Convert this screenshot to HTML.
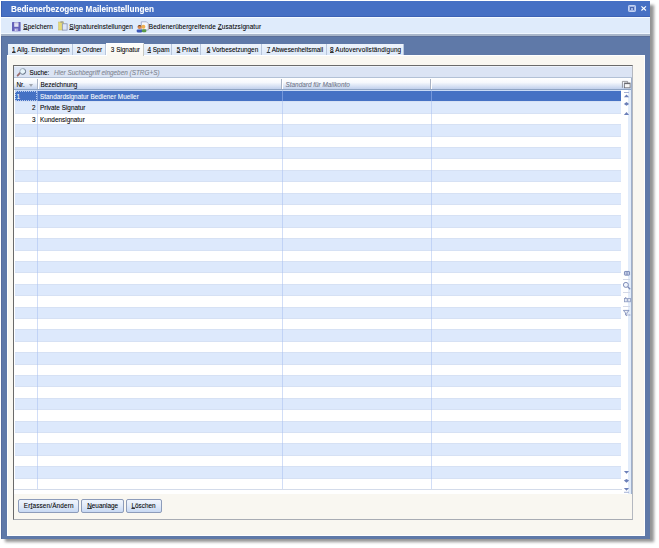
<!DOCTYPE html>
<html><head><meta charset="utf-8">
<style>
*{margin:0;padding:0;box-sizing:border-box}
html,body{width:659px;height:548px;background:#fff;overflow:hidden;position:relative;font-family:"Liberation Sans",sans-serif}
.a{position:absolute}
.t{position:absolute;white-space:nowrap;font-size:6.4px;line-height:8px;color:#000;-webkit-text-stroke-width:0.07px}
.row{position:absolute;left:15.4px;width:606.1px;height:11.4px}
u{text-decoration:underline;text-underline-offset:0.1px;text-decoration-thickness:0.5px;text-decoration-color:#333}
.tab{position:absolute;top:43.8px;height:11px;background:linear-gradient(#eef4fc,#dce8f8);border-right:1px solid #b8c6dc}
.btn{position:absolute;top:498.8px;height:13.8px;border:1px solid #8d9cba;border-radius:2px;background:linear-gradient(#f0f5fd,#e2ebf9 45%,#c8d9f3)}
svg{position:absolute;overflow:visible}
</style></head><body>
<!-- shadow -->
<div class="a" style="left:5px;top:4.5px;width:648.5px;height:537.5px;background:rgba(0,0,0,0.42);filter:blur(1.6px)"></div>
<!-- window frame -->
<div class="a" style="left:1.3px;top:1px;width:648.7px;height:537.5px;background:#5f79a8;border-left:0.8px solid #566c9c"></div>
<!-- title bar -->
<div class="a" style="left:1px;top:1px;width:649px;height:15.8px;background:#4670c4;border-left:1px solid #3a5fb0;border-bottom:0.8px solid #3d62b5"></div>
<div class="t" style="left:11px;top:4.3px;font-size:8.8px;line-height:10px;font-weight:bold;color:#fff;transform:scaleX(0.925);transform-origin:0 0">Bedienerbezogene Maileinstellungen</div>
<!-- restore icon -->
<div class="a" style="left:628.2px;top:5.2px;width:7.8px;height:7px;background:#9fb5e6;border:0.7px solid #c4d2f2;border-radius:1.2px"></div>
<div class="a" style="left:630.3px;top:7px;width:3.6px;height:3.4px;border:0.8px solid #4a66b0;border-bottom-width:0"></div>
<!-- close X -->
<svg style="left:640.7px;top:6.4px" width="5.4" height="4.8" viewBox="0 0 5.4 4.8"><path d="M0.4 0.3 L5 4.5 M5 0.3 L0.4 4.5" stroke="#fff" stroke-width="1.1"/></svg>
<!-- toolbar -->
<div class="a" style="left:1px;top:16.5px;width:649px;height:17.5px;background:#dfebfb;border-top:1px solid #f6fbff;border-bottom:1px solid #f0f7ff"></div>
<div class="a" style="left:1px;top:34px;width:649px;height:2px;background:#a9b6c9"></div>
<div class="a" style="left:1px;top:36px;width:649px;height:1px;background:#5a6e98"></div>
<!-- save icon -->
<svg style="left:12px;top:21.5px" width="9" height="9.5" viewBox="0 0 9 9.5">
<rect x="0" y="0" width="8.6" height="9.3" rx="0.6" fill="#6461b8"/>
<rect x="2.2" y="0.4" width="4.3" height="4.4" fill="#e4e4f4"/>
<rect x="2.6" y="1.6" width="3.4" height="0.5" fill="#b8b8d0"/>
<rect x="2.4" y="6.4" width="3.8" height="2.9" fill="#a6a4dc"/>
<rect x="3.2" y="7.2" width="1" height="1.6" fill="#e8e8f8"/>
</svg>
<div class="t" style="left:23.3px;top:23px;letter-spacing:0.1px"><u>S</u>peichern</div>
<!-- clipboard icon -->
<svg style="left:57.5px;top:21.3px" width="10" height="10" viewBox="0 0 10 10">
<rect x="0.6" y="1" width="5" height="8" fill="#e6da78" stroke="#c8bd60" stroke-width="0.5"/>
<rect x="2.4" y="0.3" width="3" height="1.5" fill="#a0a090"/>
<rect x="4.3" y="2.8" width="4.8" height="6.3" fill="#dfe6f8" stroke="#7c86aa" stroke-width="0.7"/>
</svg>
<div class="t" style="left:69.3px;top:23px;letter-spacing:0.1px"><u>S</u>ignatureinstellungen</div>
<!-- people icon -->
<svg style="left:135.5px;top:21px" width="13" height="11.5" viewBox="0 0 13 11.5">
<path d="M5.3 0.8 H10.5 L12.3 2.6 V9 H5.3 Z" fill="#f4f6fb" stroke="#8c94b8" stroke-width="0.7"/>
<circle cx="3.6" cy="6" r="2.1" fill="#d88850"/>
<path d="M1.5 5.5 Q3.6 3 5.7 5.5 Q3.6 4.6 1.5 5.5Z" fill="#3a2a20"/>
<rect x="0.6" y="8.4" width="5.8" height="3" rx="1.3" fill="#3c58b8"/>
<circle cx="7.4" cy="5.8" r="2" fill="#f0b050"/>
<rect x="5.8" y="8.2" width="4.6" height="3" rx="1.3" fill="#5a9a48"/>
</svg>
<div class="t" style="left:148.8px;top:23px;letter-spacing:0.1px">Bedienerübergreifende <u>Z</u>usatzsignatur</div>

<!-- content -->
<div class="a" style="left:6.8px;top:54.8px;width:637.8px;height:480.9px;background:#f9f7f1;border:1px solid #fff"></div>

<!-- tabs -->
<div class="tab" style="left:7.5px;width:65px"></div>
<div class="t" style="left:12px;top:46.3px"><u>1</u> Allg. Einstellungen</div>
<div class="tab" style="left:72.5px;width:33.8px"></div>
<div class="t" style="left:77px;top:46.3px"><u>2</u> Ordner</div>
<div class="a" style="left:106.3px;top:42.7px;width:37.4px;height:13px;background:linear-gradient(#fdfdfb,#f9f7f1);border-left:1px solid #fff;border-top:1px solid #fff;border-right:1px solid #c8c8c0"></div>
<div class="t" style="left:110.8px;top:45.5px">3 Signatur</div>
<div class="tab" style="left:143.7px;width:28.3px"></div>
<div class="t" style="left:147.5px;top:46.3px"><u>4</u> Spam</div>
<div class="tab" style="left:172px;width:29px"></div>
<div class="t" style="left:176.7px;top:46.3px"><u>5</u> Privat</div>
<div class="tab" style="left:201px;width:61px"></div>
<div class="t" style="left:206.7px;top:46.3px"><u>6</u> Vorbesetzungen</div>
<div class="tab" style="left:262px;width:64.7px"></div>
<div class="t" style="left:266.7px;top:46.3px"><u>7</u> Abwesenheitsmail</div>
<div class="tab" style="left:326.7px;width:77.5px"></div>
<div class="t" style="left:330px;top:46.3px;letter-spacing:0.15px"><u>8</u> Autovervollständigung</div>

<!-- group box -->
<div class="a" style="left:13px;top:65px;width:619.5px;height:455px;border:1px solid #6a6a6a;border-right-color:#b4b8c0;border-bottom-color:#a8acb4"></div>
<!-- search bar -->
<div class="a" style="left:14px;top:66px;width:618px;height:12px;background:#dbe4f4;border-top:0.6px solid #eef3fb;border-bottom:1px solid #b2c1d6"></div>
<svg style="left:16px;top:67px" width="11" height="10" viewBox="0 0 11 10">
<defs><linearGradient id="lr" x1="0" y1="0" x2="1" y2="1"><stop offset="0" stop-color="#b8c4d0"/><stop offset="1" stop-color="#3e4e66"/></linearGradient></defs>
<path d="M4.3 5.6 L1.6 8.6" stroke="#9a6a6a" stroke-width="1.7" stroke-linecap="round"/>
<circle cx="6.7" cy="4.4" r="2.9" fill="#e6f4fa" stroke="url(#lr)" stroke-width="1"/>
</svg>
<div class="t" style="left:29.4px;top:68.6px">Suche:</div>
<div class="t" style="left:53.9px;top:68.9px;font-style:italic;color:#80848f">Hier Suchbegriff eingeben (STRG+S)</div>
<!-- header -->
<div class="a" style="left:14px;top:78px;width:618px;height:12px;background:linear-gradient(#ffffff,#f6f9fd 40%,#c0d0ec);border-bottom:1px solid #8ea4c4"></div>
<div class="t" style="left:16.5px;top:81.2px">Nr.</div>
<svg style="left:29px;top:83.6px" width="4" height="3" viewBox="0 0 4 3"><path d="M0 0 L4 0 L2 3 Z" fill="#a0a6b0"/></svg>
<div class="t" style="left:40.4px;top:81.2px">Bezeichnung</div>
<div class="t" style="left:285.5px;top:81.2px;font-style:italic;color:#70768a">Standard für Mailkonto</div>
<!-- column chooser icon -->
<svg style="left:621.8px;top:81px" width="8.5" height="7.2" viewBox="0 0 8.5 7.2">
<path d="M0.4 6.8 V0.4 H5.6 V1.8" fill="none" stroke="#7a7a80" stroke-width="0.75"/>
<rect x="2.6" y="2" width="5.5" height="4.8" fill="#f6f6f6" stroke="#6a6a70" stroke-width="0.75"/>
<rect x="2.6" y="2" width="5.5" height="1.1" fill="#6a6a70"/>
</svg>
<!-- grid rows -->
<div class="a" style="left:14px;top:89.5px;width:618px;height:404px;background:#fff"></div>
<div class="row" style="top:90.00px;background:#4571c4;border-top:1px solid #c9daf5"></div>
<div class="row" style="top:101.40px;background:#dde9fc;border-top:0.6px solid #d6e1f4"></div>
<div class="row" style="top:112.80px;background:#ffffff;border-top:0.6px solid #d6e1f4"></div>
<div class="row" style="top:124.20px;background:#dde9fc;border-top:0.6px solid #d6e1f4"></div>
<div class="row" style="top:135.60px;background:#ffffff;border-top:0.6px solid #d6e1f4"></div>
<div class="row" style="top:147.00px;background:#dde9fc;border-top:0.6px solid #d6e1f4"></div>
<div class="row" style="top:158.40px;background:#ffffff;border-top:0.6px solid #d6e1f4"></div>
<div class="row" style="top:169.80px;background:#dde9fc;border-top:0.6px solid #d6e1f4"></div>
<div class="row" style="top:181.20px;background:#ffffff;border-top:0.6px solid #d6e1f4"></div>
<div class="row" style="top:192.60px;background:#dde9fc;border-top:0.6px solid #d6e1f4"></div>
<div class="row" style="top:204.00px;background:#ffffff;border-top:0.6px solid #d6e1f4"></div>
<div class="row" style="top:215.40px;background:#dde9fc;border-top:0.6px solid #d6e1f4"></div>
<div class="row" style="top:226.80px;background:#ffffff;border-top:0.6px solid #d6e1f4"></div>
<div class="row" style="top:238.20px;background:#dde9fc;border-top:0.6px solid #d6e1f4"></div>
<div class="row" style="top:249.60px;background:#ffffff;border-top:0.6px solid #d6e1f4"></div>
<div class="row" style="top:261.00px;background:#dde9fc;border-top:0.6px solid #d6e1f4"></div>
<div class="row" style="top:272.40px;background:#ffffff;border-top:0.6px solid #d6e1f4"></div>
<div class="row" style="top:283.80px;background:#dde9fc;border-top:0.6px solid #d6e1f4"></div>
<div class="row" style="top:295.20px;background:#ffffff;border-top:0.6px solid #d6e1f4"></div>
<div class="row" style="top:306.60px;background:#dde9fc;border-top:0.6px solid #d6e1f4"></div>
<div class="row" style="top:318.00px;background:#ffffff;border-top:0.6px solid #d6e1f4"></div>
<div class="row" style="top:329.40px;background:#dde9fc;border-top:0.6px solid #d6e1f4"></div>
<div class="row" style="top:340.80px;background:#ffffff;border-top:0.6px solid #d6e1f4"></div>
<div class="row" style="top:352.20px;background:#dde9fc;border-top:0.6px solid #d6e1f4"></div>
<div class="row" style="top:363.60px;background:#ffffff;border-top:0.6px solid #d6e1f4"></div>
<div class="row" style="top:375.00px;background:#dde9fc;border-top:0.6px solid #d6e1f4"></div>
<div class="row" style="top:386.40px;background:#ffffff;border-top:0.6px solid #d6e1f4"></div>
<div class="row" style="top:397.80px;background:#dde9fc;border-top:0.6px solid #d6e1f4"></div>
<div class="row" style="top:409.20px;background:#ffffff;border-top:0.6px solid #d6e1f4"></div>
<div class="row" style="top:420.60px;background:#dde9fc;border-top:0.6px solid #d6e1f4"></div>
<div class="row" style="top:432.00px;background:#ffffff;border-top:0.6px solid #d6e1f4"></div>
<div class="row" style="top:443.40px;background:#dde9fc;border-top:0.6px solid #d6e1f4"></div>
<div class="row" style="top:454.80px;background:#ffffff;border-top:0.6px solid #d6e1f4"></div>
<div class="row" style="top:466.20px;background:#dde9fc;border-top:0.6px solid #d6e1f4"></div>
<div class="row" style="top:477.60px;background:#ffffff;border-top:0.6px solid #d6e1f4"></div>
<div class="t" style="left:16.5px;top:92.8px;color:#fff">1</div>
<div class="t" style="left:40px;top:92.8px;color:#fff">Standardsignatur Bediener Mueller</div>
<div class="t" style="left:32px;top:104.2px">2</div>
<div class="t" style="left:40px;top:104.2px">Private Signatur</div>
<div class="t" style="left:32px;top:115.6px">3</div>
<div class="t" style="left:40px;top:115.6px">Kundensignatur</div>
<!-- column lines -->
<div class="a" style="left:37.1px;top:90px;width:0.6px;height:398.5px;background:rgba(165,190,240,0.5)"></div>
<div class="a" style="left:281.9px;top:90px;width:0.6px;height:398.5px;background:rgba(165,190,240,0.5)"></div>
<div class="a" style="left:430.6px;top:90px;width:0.6px;height:398.5px;background:rgba(165,190,240,0.5)"></div>
<div class="a" style="left:37px;top:79px;width:0.9px;height:10px;background:#a9b3c4"></div>
<div class="a" style="left:37.9px;top:79px;width:0.8px;height:10px;background:#fff"></div>
<div class="a" style="left:281.4px;top:79px;width:0.9px;height:10px;background:#a9b3c4"></div>
<div class="a" style="left:282.3px;top:79px;width:0.8px;height:10px;background:#fff"></div>
<div class="a" style="left:430.1px;top:79px;width:0.9px;height:10px;background:#a9b3c4"></div>
<div class="a" style="left:431px;top:79px;width:0.8px;height:10px;background:#fff"></div>
<div class="a" style="left:15.3px;top:90.6px;width:22px;height:10.6px;border:0.5px dotted #b8cbf0"></div>
<div class="a" style="left:14px;top:488.5px;width:607.5px;height:1px;background:#d3dbea"></div>
<!-- navigator line -->
<div class="a" style="left:628.2px;top:90px;width:2.6px;height:403.5px;background:#e2ecfa"></div>
<div class="a" style="left:630.8px;top:78px;width:1.4px;height:415.5px;background:#9fb0cc"></div>
<!-- nav icons -->
<svg style="left:624px;top:92px" width="5" height="5.5" viewBox="0 0 5 5.5"><rect x="0" y="0" width="5" height="0.9" fill="#9aa8d0"/><path d="M-0.1 5.3 L2.5 2.4 L5.1 5.3 Z" fill="#6b7fb8"/></svg>
<svg style="left:624px;top:102.4px" width="5" height="3.6" viewBox="0 0 5 3.6"><path d="M-0.1 2.1 L2.5 -0.1 L5.1 2.1 L2.5 3.7 Z" fill="#6b7fb8"/></svg>
<svg style="left:624px;top:112px" width="5" height="3" viewBox="0 0 5 3"><path d="M-0.1 3 L2.5 0 L5.1 3 Z" fill="#6b7fb8"/></svg>
<svg style="left:623.9px;top:270.9px" width="6" height="4.6" viewBox="0 0 6 4.6"><rect x="0.45" y="0.45" width="5.1" height="3.7" rx="0.5" fill="#dfe6f6" stroke="#7484b4" stroke-width="0.9"/><path d="M2.2 0.4 V4.2 M3.8 0.4 V4.2" stroke="#7484b4" stroke-width="0.8"/></svg>
<div class="a" style="left:623px;top:278.6px;width:7px;height:0.6px;background:#d0d6e6"></div>
<svg style="left:623.3px;top:281.8px" width="8" height="8" viewBox="0 0 8 8"><circle cx="2.9" cy="2.9" r="2.5" fill="#f2f5fc" stroke="#7d8cb8" stroke-width="1"/><path d="M4.8 4.8 L7.2 7.2" stroke="#7d8cb8" stroke-width="1.3"/></svg>
<div class="a" style="left:623px;top:292.4px;width:7px;height:0.6px;background:#d4d9e8"></div>
<svg style="left:623.5px;top:297.3px" width="7" height="5.2" viewBox="0 0 7 5.2"><rect x="0.4" y="1.4" width="2.8" height="3.4" fill="#e6ebf6" stroke="#8c9ac0" stroke-width="0.8"/><rect x="3.8" y="1.4" width="2.8" height="3.4" fill="#e6ebf6" stroke="#8c9ac0" stroke-width="0.8"/><rect x="1.2" y="0" width="1" height="1.4" fill="#8c9ac0"/></svg>
<div class="a" style="left:623px;top:305.8px;width:7px;height:0.6px;background:#d4d9e8"></div>
<svg style="left:622.8px;top:309.8px" width="8" height="6.2" viewBox="0 0 8 6.2"><path d="M0.4 0.4 H6 L3.9 3 V5.8 L2.5 5 V3 Z" fill="#eef1f8" stroke="#7484b4" stroke-width="0.8"/><path d="M5.4 4 L7.4 6 M7.4 4 L5.4 6" stroke="#98a4c8" stroke-width="0.6"/></svg>
<svg style="left:624px;top:470.5px" width="5" height="2.8" viewBox="0 0 5 2.8"><path d="M-0.1 0 L2.5 2.8 L5.1 0 Z" fill="#6b7fb8"/></svg>
<svg style="left:624px;top:479.2px" width="5" height="3.6" viewBox="0 0 5 3.6"><path d="M-0.1 1.5 L2.5 -0.1 L5.1 1.5 L2.5 3.7 Z" fill="#6b7fb8"/></svg>
<svg style="left:624px;top:488px" width="5" height="5" viewBox="0 0 5 5"><path d="M-0.1 0 L2.5 2.8 L5.1 0 Z" fill="#6b7fb8"/><rect x="0" y="3.8" width="5" height="0.9" fill="#9aa8d0"/></svg>
<!-- buttons -->
<div class="btn" style="left:18.3px;width:60.5px"></div>
<div class="t" style="left:23.8px;top:502.4px;letter-spacing:0.15px">Er<u>f</u>assen/Ändern</div>
<div class="btn" style="left:81px;width:42.5px"></div>
<div class="t" style="left:87.2px;top:502.4px"><u>N</u>euanlage</div>
<div class="btn" style="left:126px;width:35.7px"></div>
<div class="t" style="left:131.4px;top:502.4px"><u>L</u>öschen</div>

</body></html>
